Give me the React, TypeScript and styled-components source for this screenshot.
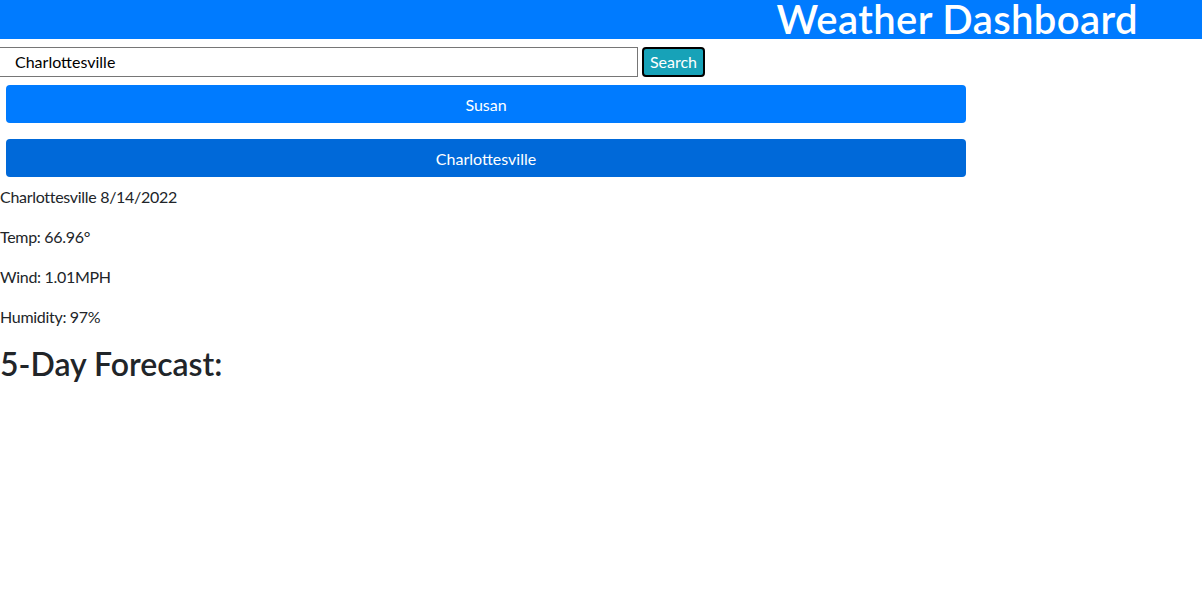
import React from "react";
import styled, { createGlobalStyle } from "styled-components";

const Global = createGlobalStyle`
  html, body { margin: 0; padding: 0; background: #fff; }
  body {
    font-family: "Segoe UI", Lato, "Noto Sans", sans-serif;
    font-size: 16px;
    line-height: 1.5;
    color: #212529;
  }
  * { box-sizing: border-box; }
`;

const Header = styled.header`
  height: 39px;
  background: #007bff;
  display: flex;
  justify-content: flex-end;
  align-items: center;
  padding-right: 64px;
`;

const Title = styled.h1`
  margin: 0;
  color: #fff;
  font-size: 40px;
  font-weight: 600;
  line-height: 39px;
  letter-spacing: 0.4px;
`;

const Main = styled.main`
  display: flex;
  flex-direction: column;
  padding-top: 8px;
`;

const SearchRow = styled.form`
  display: flex;
  align-items: stretch;
  gap: 4px;
  height: 30px;
`;

const Input = styled.input`
  width: 639px;
  margin-left: -1px;
  border: 1px solid #767676;
  padding: 0 0 1px 15px;
  font-family: inherit;
  font-size: 16px;
  color: #000;
  outline: none;
`;

const SearchButton = styled.button`
  width: 63px;
  border: 2px solid #000;
  border-radius: 4px;
  background: #17a2b8;
  color: #fff;
  font-family: inherit;
  font-size: 16px;
  padding: 0 0 1px;
`;

const History = styled.div`
  display: flex;
  flex-direction: column;
  gap: 16px;
  margin: 8px 0 8px 6px;
`;

const CityButton = styled.button<{ $active?: boolean }>`
  width: 960px;
  height: 38px;
  border: none;
  border-radius: 4px;
  background: ${(p) => (p.$active ? "#0069d9" : "#007bff")};
  color: #fff;
  font-family: inherit;
  font-size: 16px;
`;

const Info = styled.p`
  margin: 0 0 16px;
  line-height: 24px;
  letter-spacing: -0.3px;
`;

const Forecast = styled.h2`
  margin: 0;
  font-size: 32px;
  font-weight: 600;
  line-height: 38px;
`;

export default function App() {
  return (
    <>
      <Global />
      <Header>
        <Title>Weather Dashboard</Title>
      </Header>
      <Main>
        <SearchRow onSubmit={(e) => e.preventDefault()}>
          <Input defaultValue="Charlottesville" />
          <SearchButton type="submit">Search</SearchButton>
        </SearchRow>
        <History>
          <CityButton>Susan</CityButton>
          <CityButton $active>Charlottesville</CityButton>
        </History>
        <Info>Charlottesville 8/14/2022</Info>
        <Info>Temp: 66.96°</Info>
        <Info>Wind: 1.01MPH</Info>
        <Info>Humidity: 97%</Info>
        <Forecast>5-Day Forecast:</Forecast>
      </Main>
    </>
  );
}
